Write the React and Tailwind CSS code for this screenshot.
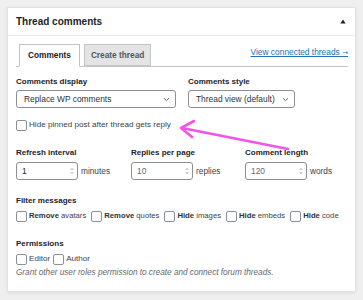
import React from "react";

const Label = ({ children }) => (
  <div className="h-[10px] text-[8px] leading-[10px] font-bold text-[#1d2327] whitespace-nowrap">{children}</div>
);

const Box = () => (
  <span className="inline-block w-[11px] h-[11px] shrink-0 rounded-[2px] border border-[#8c8f94] bg-white" />
);

const Chevron = () => (
  <svg width="7" height="5" viewBox="0 0 7 5" className="shrink-0">
    <path d="M1 1.2 L3.5 3.6 L6 1.2" fill="none" stroke="#50575e" strokeWidth="0.9" />
  </svg>
);

const Spinner = () => (
  <svg width="4" height="8" viewBox="0 0 4 8" className="shrink-0">
    <path d="M0.6 3 L2 1.4 L3.4 3" fill="none" stroke="#8c8f94" strokeWidth="0.7" />
    <path d="M0.6 5 L2 6.6 L3.4 5" fill="none" stroke="#8c8f94" strokeWidth="0.7" />
  </svg>
);

const Select = ({ w, children }) => (
  <div className={`${w} h-[18px] mt-[3px] flex items-center justify-between pl-[7px] pr-[5px] rounded-[3px] border border-[#8c8f94] bg-white text-[8.4px] text-[#2c3338] whitespace-nowrap`}>
    <span>{children}</span>
    <Chevron />
  </div>
);

const NumInput = ({ value, unit, dark }) => (
  <div className="mt-[4px] flex items-center gap-[3px]">
    <div className="w-[62px] h-[18px] flex items-center justify-between pl-[5px] pr-[3px] rounded-[3px] border border-[#8c8f94] bg-white">
      <span className={`text-[8.4px] ${dark ? "text-[#1d2327]" : "text-[#646970]"}`}>{value}</span>
      <Spinner />
    </div>
    <span className="text-[8.3px] text-[#3c434a]">{unit}</span>
  </div>
);

const Check = ({ bold, rest, small }) => (
  <div className={`flex items-center gap-[2px] ${small ? "text-[7.7px]" : "text-[8.1px]"} leading-[12px] text-[#3c434a] whitespace-nowrap shrink-0`}>
    <Box />
    <span>
      {bold && <span className="font-bold text-[#2c3338]">{bold}</span>}
      {rest}
    </span>
  </div>
);

export default function App() {
  return (
    <div className="relative w-[363px] h-[300px] bg-[#efeff0] pt-[7px] px-[7px] font-['Liberation_Sans',Arial,sans-serif]">
      <div className="bg-white border border-[#e2e2e4] shadow-[0_1px_3px_rgba(0,0,0,0.08)]">
        <div className="h-[28px] flex items-center justify-between pl-[8px] pr-[9px] border-b border-[#ececee]">
          <span className="text-[10px] font-bold text-[#1d2327]">Thread comments</span>
          <svg width="6" height="5" viewBox="0 0 6 5">
            <path d="M3 0.5 L5.6 4.5 L0.4 4.5 Z" fill="#1d2327" />
          </svg>
        </div>
        <div className="pt-[8px] pl-[8px] pr-[7px] pb-[13px]">
          <div className="flex items-start justify-between border-b border-[#c3c4c7]">
            <div className="flex gap-[4px] pl-[3px]">
              <div className="h-[23px] -mb-px px-[8px] flex items-center border border-[#c3c4c7] border-b-white bg-white text-[8.3px] font-bold text-[#1d2327]">
                Comments
              </div>
              <div className="h-[22px] px-[6px] flex items-center border border-[#c3c4c7] bg-[#e4e4e5] text-[8.3px] font-bold text-[#50575e]">
                Create thread
              </div>
            </div>
            <a className="mt-[3px] text-[8.4px] leading-[10px] text-[#2271b1] underline whitespace-nowrap">
              View connected threads <span className="font-['DejaVu_Sans',sans-serif] text-[7px]">→</span>
            </a>
          </div>

          <div className="pt-[10px]">
            <div className="flex">
              <div className="w-[172px]">
                <Label>Comments display</Label>
                <Select w="w-[160px]">Replace WP comments</Select>
              </div>
              <div>
                <Label>Comments style</Label>
                <Select w="w-[107px]">Thread view (default)</Select>
              </div>
            </div>

            <div className="mt-[11px] flex">
              <Check rest="Hide pinned post after thread gets reply" />
            </div>

            <div className="mt-[17px] flex">
              <div className="w-[115px]">
                <Label>Refresh interval</Label>
                <NumInput value="1" unit="minutes" dark />
              </div>
              <div className="w-[114px]">
                <Label>Replies per page</Label>
                <NumInput value="10" unit="replies" />
              </div>
              <div>
                <Label>Comment length</Label>
                <NumInput value="120" unit="words" />
              </div>
            </div>

            <div className="mt-[16px]">
              <Label>Filter messages</Label>
              <div className="mt-[4px] flex gap-[5px]">
                <Check small bold="Remove" rest=" avatars" />
                <Check small bold="Remove" rest=" quotes" />
                <Check small bold="Hide" rest=" images" />
                <Check small bold="Hide" rest=" embeds" />
                <Check small bold="Hide" rest=" code" />
              </div>
            </div>

            <div className="mt-[17px]">
              <Label>Permissions</Label>
              <div className="mt-[4px] flex gap-[3px]">
                <Check rest="Editor" />
                <Check rest="Author" />
              </div>
              <div className="mt-[3px] text-[8.2px] leading-[10px] italic text-[#646970] whitespace-nowrap">
                Grant other user roles permission to create and connect forum threads.
              </div>
            </div>
          </div>
        </div>
      </div>

      <svg className="absolute inset-0 pointer-events-none" width="363" height="300" viewBox="0 0 363 300">
        <path d="M288 149 L182 128" stroke="#ef55e6" strokeWidth="2.6" strokeLinecap="round" fill="none" />
        <path d="M194 121 L181 128 L192 137" stroke="#ef55e6" strokeWidth="2.6" strokeLinecap="round" strokeLinejoin="round" fill="none" />
      </svg>
    </div>
  );
}
